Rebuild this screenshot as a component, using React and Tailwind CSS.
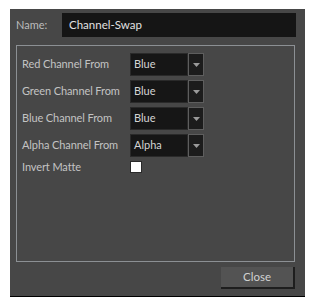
import React from "react";

const font = { fontFamily: 'Lato, "Noto Sans", sans-serif' };

function Combo({ value }) {
  return (
    <div className="flex h-[23px] w-[74px]">
      <div className="flex h-full w-[58px] items-center border border-[#2a2a2a] bg-[#161616] pl-[3px] text-[11px] text-[#d4d4d4]">
        {value}
      </div>
      <div className="flex h-full w-[16px] items-center justify-center border border-[#5e5e5e] bg-[#1c1c1c]">
        <svg width="7" height="4" viewBox="0 0 7 4">
          <path d="M0 0 H7 L3.5 4 Z" fill="#9a9a9a" />
        </svg>
      </div>
    </div>
  );
}

function Row({ label, value }) {
  return (
    <div className="flex h-[23px] items-center">
      <div className="w-[108px] whitespace-nowrap text-[11px] tracking-[-0.1px] text-[#c3c3c3]">{label}</div>
      <Combo value={value} />
    </div>
  );
}

export default function App() {
  return (
    <div className="h-[307px] w-[315px] bg-white pl-[10px] pt-[9px]" style={font}>
      <div className="flex h-[288px] w-[295px] flex-col border-b border-black bg-[#474747]">
        <div className="mt-[4px] flex h-[24px] items-center pl-[6px]">
          <div className="w-[46px] text-[11px] text-[#bcbcbc]">Name:</div>
          <div className="flex h-[24px] w-[234px] items-center bg-[#151515] pl-[7px] text-[11.5px] text-[#e2e2e2]">
            Channel-Swap
          </div>
        </div>
        <div className="ml-[6px] mt-[8px] flex h-[217px] w-[279px] flex-col gap-[4px] border border-[#8c9094] pl-[5px] pt-[7px]">
          <Row label="Red Channel From" value="Blue" />
          <Row label="Green Channel From" value="Blue" />
          <Row label="Blue Channel From" value="Blue" />
          <Row label="Alpha Channel From" value="Alpha" />
          <div className="flex h-[12px] items-center">
            <div className="w-[108px] whitespace-nowrap text-[11px] tracking-[-0.1px] text-[#c3c3c3]">Invert Matte</div>
            <div className="h-[12px] w-[12px] border border-[#2a2a2a] bg-white" />
          </div>
        </div>
        <div className="mr-[10px] mt-[5px] flex justify-end">
          <button className="flex h-[22px] w-[74px] items-center justify-center border-b-2 border-r-2 border-[#1e1e1e] bg-[#535353] text-[11.5px] text-[#d2d2d2]">
            Close
          </button>
        </div>
      </div>
    </div>
  );
}
